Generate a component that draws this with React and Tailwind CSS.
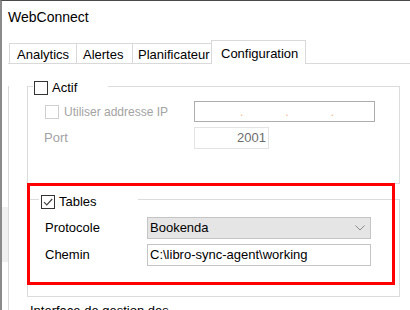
import React from 'react'

function Box({ checked, disabled }) {
  return (
    <span className={`w-[14px] h-[14px] border bg-white flex items-center justify-center shrink-0 ${disabled ? 'border-[#cfcfcf]' : 'border-[#333333]'}`}>
      {checked && (
        <svg width="10" height="10" viewBox="0 0 10 10">
          <polyline points="1,5.2 3.8,8 9.2,2" fill="none" stroke="#444" strokeWidth="1.2" />
        </svg>
      )}
    </span>
  )
}

const tabs = [
  { label: 'Analytics', w: 'w-[67px] pl-[7px]' },
  { label: 'Alertes', w: 'w-[56px] pl-[6px]' },
  { label: 'Planificateur', w: 'w-[79px] pl-[5px]' },
]

export default function App() {
  return (
    <div className="w-[410px] h-[310px] overflow-hidden relative bg-white border-t border-t-[#4a4a4a] border-l-2 border-l-[#8a8a8a] font-['Liberation_Sans',Arial,sans-serif] text-[13px] text-black">
      <div className="pl-[6px] pt-[8px] text-[14px] leading-[16px]">WebConnect</div>

      <div className="flex mt-[15px]">
        {/* gutter */}
        <div className="w-[6px] shrink-0 flex flex-col">
          <div className="h-[167px]" />
          <div className="h-[55px] bg-[#f0f0f0]" />
        </div>

        <div className="flex-1">
          {/* tab strip */}
          <div className="flex items-end border-b border-[#d9d9d9] pl-px">
            {tabs.map(t => (
              <div key={t.label} className={`h-[20px] border-t border-l border-[#d9d9d9] flex items-center pt-[2px] leading-[16px] ${t.w}`}>
                {t.label}
              </div>
            ))}
            <div className="h-[24px] w-[95px] -mb-px border-t border-l border-r border-[#d9d9d9] bg-white pl-[9px] pt-[5px] leading-[16px] relative">
              Configuration
            </div>
          </div>

          {/* panel */}
          <div className="border-l border-[#d9d9d9] h-[300px]">
            {/* Actif group */}
            <div className="ml-[18px] mt-[22px] w-[373px] border border-[#dcdcdc] pb-[34px]">
              <div className="-mt-[6px] ml-[5px] w-[75px] h-[14px] bg-white flex items-center gap-[4px] pl-px">
                <Box />
                <span className="leading-[16px]">Actif</span>
              </div>

              <div className="mt-[6px] flex items-center h-[21px] pl-[17px]">
                <div className="w-[149px] flex items-center gap-[5px]">
                  <Box disabled />
                  <span className="text-[12px] text-[#a3a3a3] leading-[16px]">Utiliser addresse IP</span>
                </div>
                <div className="w-[181px] h-[21px] border border-[#adadad] flex items-end pb-[3px] text-[#f2b48a] text-[12px] leading-[12px]">
                  <span className="ml-[45px]">.</span>
                  <span className="ml-[42px]">.</span>
                  <span className="ml-[42px]">.</span>
                </div>
              </div>

              <div className="mt-[5px] flex items-center h-[22px] pl-[16px]">
                <div className="w-[150px] text-[#a3a3a3] leading-[16px]">Port</div>
                <div className="w-[75px] h-[22px] border border-[#e3e3e3] flex items-center justify-end pr-[2px] text-[#6d6d6d] leading-[16px]">
                  2001
                </div>
              </div>
            </div>

            {/* Tables group */}
            <div className="ml-[18px] mt-[15px] w-[373px] border border-[#dcdcdc] pb-[30px]">
              <div className="-mt-[5px] ml-[11px] w-[99px] h-[14px] bg-white flex items-center gap-[4px] pl-[2px]">
                <Box checked />
                <span className="leading-[16px]">Tables</span>
              </div>

              <div className="mt-[8px] flex items-center h-[22px] pl-[17px]">
                <div className="w-[102px] leading-[16px]">Protocole</div>
                <div className="w-[224px] h-[22px] border border-[#c4c4c4] bg-[#e5e5e5] flex items-center justify-between pl-[2px] pr-[5px]">
                  <span className="leading-[16px]">Bookenda</span>
                  <svg width="10" height="6" viewBox="0 0 10 6">
                    <polyline points="0.5,0.5 5,5 9.5,0.5" fill="none" stroke="#8a8a8a" strokeWidth="1" />
                  </svg>
                </div>
              </div>

              <div className="mt-[5px] flex items-center h-[22px] pl-[17px]">
                <div className="w-[102px] leading-[16px]">Chemin</div>
                <div className="w-[224px] h-[22px] border border-[#c4c4c4] bg-white flex items-center pl-[2px] leading-[16px]">
                  C:\libro-sync-agent\working
                </div>
              </div>
            </div>

            <div className="ml-[21px] mt-[6px] leading-[16px]">Interface de gestion des</div>
          </div>
        </div>
      </div>

      {/* highlight annotation */}
      <div className="absolute left-[25px] top-[182px] w-[368px] h-[102px] border-[3px] border-[#ff0000] pointer-events-none" />
    </div>
  )
}
